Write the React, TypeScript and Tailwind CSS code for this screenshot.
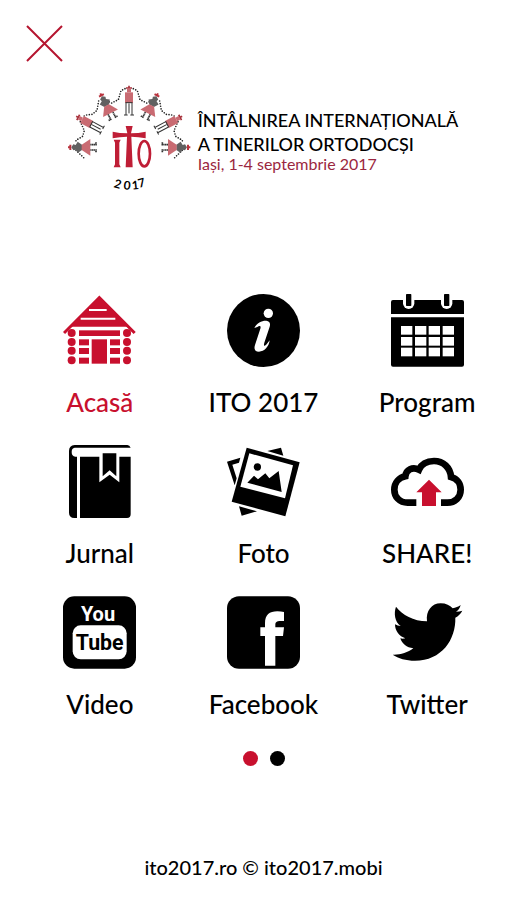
import React from 'react';

const RED = '#c8102e';

interface MenuItem {
  label: string;
  href: string;
  icon: React.ReactNode;
  active?: boolean;
}

function HomeIcon() {
  const logRows = [172, 198, 227];
  return (
    <svg viewBox="39 27 219 219" className="size-[73px]" fill="currentColor" aria-hidden="true">
      <polyline points="42,144 148,38 254,144" fill="none" stroke="currentColor" strokeWidth="9" />
      <polygon points="148,36 236,125 60,125" />
      <path d="M117 75H170M92 101H196" stroke="#fff" strokeWidth="6" />
      <rect x="87" y="136" width="123" height="17" />
      {logRows.map((y) => (
        <g key={y}>
          <rect x="87" y={y - 9} width="30" height="18" />
          <rect x="180" y={y - 9} width="30" height="18" />
        </g>
      ))}
      {[145, ...logRows].map((y) => (
        <g key={y}>
          <circle cx="65" cy={y - 1} r="12" />
          <circle cx="231" cy={y - 1} r="12" />
        </g>
      ))}
      <rect x="125" y="163" width="46" height="73" />
    </svg>
  );
}

function InfoIcon() {
  return (
    <svg viewBox="66 27 219 219" className="size-[73px]" aria-hidden="true">
      <circle cx="175.500" cy="136.500" r="109.500" />
      <circle cx="190" cy="85" r="14" fill="#fff" />
      <path
        d="M148 129C156 113 172 106 184 107C194 108 197 115 194 125L178 173C175 184 178 185 186 176L194 166C192 185 178 200 162 200C150 200 146 192 150 180L166 131C169 121 163 121 157 126Z"
        fill="#fff"
      />
    </svg>
  );
}

function CalendarIcon() {
  return (
    <svg viewBox="63 27 219 219" className="size-[73px]" aria-hidden="true">
      <path d="M69 45H276Q282 45 282 51V87H63V51Q63 45 69 45ZM63 97H282V239Q282 245 276 245H69Q63 245 63 239Z" />
      {[99, 213].map((x) => (
        <g key={x}>
          <path d={`M${x} 27h34v28a17 17 0 0 1 -34 0z`} fill="#fff" />
          <rect x={x + 9} y="27" width="16" height="36" rx="2" />
        </g>
      ))}
      {[123, 156, 188].map((y) =>
        [93, 135, 176, 218].map((x) => (
          <rect key={`${x}-${y}`} x={x} y={y} width="34" height="26" fill="#fff" />
        ))
      )}
    </svg>
  );
}

function BookIcon() {
  return (
    <svg viewBox="39 30 219 219" className="size-[73px]" aria-hidden="true">
      <path d="M74 30H232Q239 31 242 38H74Q65 39 65 51Q65 64 76 65H242V238Q242 249 231 249H90V65H81V249H73Q57 248 57 233V48Q57 31 74 30Z" />
      <path d="M148 60H208V142L179 119L148 142Z" fill="#fff" />
      <path d="M158 55H199V124L179 106L158 124Z" />
    </svg>
  );
}

function PhotoIcon() {
  return (
    <svg viewBox="66 30 219 219" className="size-[73px]" aria-hidden="true">
      <path d="M66 80L106 68L102 83L82 89L95 130L89 151ZM187 48L228 38L235 62ZM102 214L156 229L110 242Z" />
      <path d="M125 38L284 82L241 244L80 200Z" />
      <path d="M133 55L264 91L240 190L106 155Z" fill="#fff" />
      <circle cx="157" cy="96" r="11" />
      <path d="M127 143L147 122L159 133L181 115L193 130L221 108L230 171Z" />
    </svg>
  );
}

function ShareIcon() {
  return (
    <svg viewBox="63 30 219 219" className="size-[73px]" aria-hidden="true">
      <path
        d="M139 203H113C88 203 73 185 73 164C73 143 87 128 106 124C108 103 128 95 147 104C155 86 172 78 192 78C220 78 241 98 243 126C262 131 272 146 272 164C272 187 255 203 232 203H213"
        fill="none"
        stroke="currentColor"
        strokeWidth="20"
      />
      <path d="M177 134L215 172H198V213H156V172H139Z" fill={RED} />
    </svg>
  );
}

function YouTubeIcon() {
  return (
    <svg viewBox="39 20 219 219" className="size-[73px]" aria-hidden="true">
      <rect x="39" y="21" width="219" height="217" rx="34" />
      <rect x="68" y="108" width="162" height="102" rx="24" fill="#fff" />
      <g fontFamily="Roboto, sans-serif" fontWeight="700" textAnchor="middle">
        <text x="144" y="94" fontSize="60" fill="#fff">You</text>
        <text x="149" y="183" fontSize="64">Tube</text>
      </g>
    </svg>
  );
}

function FacebookIcon() {
  return (
    <svg viewBox="81 20 219 219" className="size-[73px]" aria-hidden="true">
      <rect x="81" y="21" width="219" height="217" rx="36" />
      <path
        d="M195 229V140H181V114H195V102C195 76 208 66 232 66Q243 66 252 68V95H241C230 95 226 98 226 107V114H252L249 140H226V229Z"
        fill="#fff"
      />
    </svg>
  );
}

function TwitterIcon() {
  return (
    <svg viewBox="63 20 219 219" className="size-[73px]" aria-hidden="true">
      <path d="M78 52C97 77 130 95 171 96C167 65 185 42 212 42C228 42 240 48 248 57C257 55 265 52 272 47C270 56 265 63 258 67C265 67 271 66 277 64C272 73 265 80 256 85C258 150 215 214 135 214C108 214 85 207 68 196C90 197 113 190 130 177C110 175 96 163 91 147Q98 149 106 147C88 141 75 125 75 105Q83 110 92 110C74 97 71 71 78 52Z" />
    </svg>
  );
}

// Folk dancers, drawn upright around 0,0 and dotted like cross-stitch
function Man() {
  return (
    <g>
      <path d="M0 -47V-38M-9 -40H9" stroke="#a8323c" strokeWidth="5" />
      <path d="M-6 -38H6V-27H-6Z" fill="url(#stitchRed)" />
      <path d="M-12 -27H12V5H-12Z" fill="url(#stitchRed)" />
      <path d="M-10 4H10M-9 4V41M9 4V41M0 6V36M-15 41H-4M4 41H15" fill="none" stroke="#333" strokeWidth="3" />
    </g>
  );
}

function Woman() {
  return (
    <g>
      <path d="M0 -46V-36M-8 -39H8" stroke="#b9333e" strokeWidth="6" />
      <path d="M0 -36L9 -30L7 -23L17 -17L8 -4H-8L-17 -17L-7 -23L-9 -30Z" fill="url(#stitchBlack)" />
      <path d="M-8 -5H8L25 21H-25Z" fill="url(#stitchRed)" />
      <path d="M-8 21V38H-15M8 21V38H15" fill="none" stroke="#333" strokeWidth="5" strokeDasharray="4 1" />
    </g>
  );
}

function HalfCircle() {
  return (
    <g>
      <path
        d="M192 26L180 32L172 59L152 69L136 62M113 63L108 91L94 103L76 105L65 110M58 125L70 152L65 169L46 180L42 190M45 211L70 235"
        fill="none"
        stroke="#222"
        strokeWidth="5"
        strokeLinecap="round"
        strokeDasharray="0 8"
      />
      <g transform="translate(139 81) rotate(-27)"><Woman /></g>
      <g transform="translate(87 131) rotate(-62)"><Man /></g>
      <g transform="translate(67 202) rotate(-90)"><Woman /></g>
    </g>
  );
}

function Logo() {
  return (
    <svg viewBox="0 0 405 345" className="h-[115px] w-[135px] shrink-0" role="img" aria-label="ITO 2017">
      <defs>
        <pattern id="stitchRed" width="6" height="6" patternUnits="userSpaceOnUse">
          <rect width="6" height="6" fill="#e3a0a4" />
          <circle cx="3" cy="3" r="2.500" fill="#a82733" />
        </pattern>
        <pattern id="stitchBlack" width="6" height="6" patternUnits="userSpaceOnUse">
          <rect width="6" height="6" fill="#999" />
          <circle cx="3" cy="3" r="2.500" fill="#1a1a1a" />
        </pattern>
      </defs>
      <g transform="translate(204 64)"><Man /></g>
      <HalfCircle />
      <g transform="translate(409 0) scale(-1 1)"><HalfCircle /></g>
      <g fill="#bf1e36">
        <path d="M194 138H215L210 160Q232 160 254 155V175Q232 170 211 170L215 262H194L198 170Q176 170 155 175V155Q176 160 199 160Z" />
        <path d="M158 179H179L175 188V253L179 262H158L162 253V188Z" />
        <ellipse cx="250" cy="221" rx="17" ry="38" fill="none" stroke="#bf1e36" strokeWidth="8" />
      </g>
      <text
        x="157 187 214 235"
        y="321 328 329 323"
        rotate="17 6 -6 -15"
        fontFamily="Lato, sans-serif"
        fontWeight="700"
        fontSize="36"
      >
        2017
      </text>
    </svg>
  );
}

const menuItems: MenuItem[] = [
  { label: 'Acasă', href: '#acasa', icon: <HomeIcon />, active: true },
  { label: 'ITO 2017', href: '#ito-2017', icon: <InfoIcon /> },
  { label: 'Program', href: '#program', icon: <CalendarIcon /> },
  { label: 'Jurnal', href: '#jurnal', icon: <BookIcon /> },
  { label: 'Foto', href: '#foto', icon: <PhotoIcon /> },
  { label: 'SHARE!', href: '#share', icon: <ShareIcon /> },
  { label: 'Video', href: '#video', icon: <YouTubeIcon /> },
  { label: 'Facebook', href: '#facebook', icon: <FacebookIcon /> },
  { label: 'Twitter', href: '#twitter', icon: <TwitterIcon /> },
];

export default function App() {
  return (
    <div className="flex min-h-screen flex-col bg-white font-[Lato,sans-serif] text-black">
      <header>
        <button type="button" aria-label="Închide meniul" className="mt-6 ml-6 block size-10 cursor-pointer">
          <svg viewBox="0 0 40 40" className="size-10" stroke="#b5152f" strokeWidth="2" aria-hidden="true">
            <path d="M3 2L38 37M38 2L3 37" />
          </svg>
        </button>
        <div className="mt-4 flex items-start justify-center gap-0.5 pr-2">
          <Logo />
          <div className="mt-7">
            <h1 className="text-lg leading-6 font-medium">
              ÎNTÂLNIREA INTERNAȚIONALĂ
              <br />
              A TINERILOR ORTODOCȘI
            </h1>
            <p className="text-base leading-4 text-[#9b2740]">Iași, 1-4 septembrie 2017</p>
          </div>
        </div>
      </header>

      <main className="mt-[99px]">
        <nav aria-label="Meniu principal" className="grid grid-cols-3 gap-y-[22px] px-[18px]">
          {menuItems.map((item) => (
            <a
              key={item.label}
              href={item.href}
              aria-current={item.active ? 'page' : undefined}
              className={`flex flex-col items-center gap-3.5 ${item.active ? 'text-[#c8102e]' : 'text-black'}`}
            >
              {item.icon}
              <span className="text-[26px] leading-[42px] font-medium whitespace-nowrap">{item.label}</span>
            </a>
          ))}
        </nav>

        {/* Page indicator */}
        <div className="mt-[26px] flex justify-center gap-3">
          <button type="button" aria-label="Pagina 1" aria-current="true" className="size-[15px] rounded-full bg-[#c8102e]" />
          <button type="button" aria-label="Pagina 2" className="size-[15px] rounded-full bg-black" />
        </div>
      </main>

      <footer className="mt-auto pb-5 text-center text-xl leading-[26px] font-medium">
        <a href="#ito2017.ro">ito2017.ro</a> © <a href="#ito2017.mobi">ito2017.mobi</a>
      </footer>
    </div>
  );
}
